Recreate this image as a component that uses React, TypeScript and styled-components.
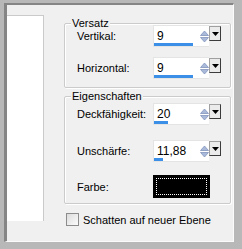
import React from "react";
import styled, { createGlobalStyle } from "styled-components";

const GlobalStyle = createGlobalStyle`
  html, body {
    margin: 0;
    padding: 0;
    background: #b8b8b8;
  }
  body {
    font-family: "Liberation Sans", Arial, sans-serif;
    font-size: 11px;
    color: #000;
  }
`;

// outer gray band around the dialog page
const Frame = styled.div`
  width: 242px;
  height: 249px;
  box-sizing: border-box;
  padding: 3px 8px 7px 4px;
  background: #b8b8b8;
`;

const Page = styled.div`
  height: 100%;
  box-sizing: border-box;
  display: flex;
  align-items: flex-start;
  background: #f0f0f0;
  border-top: 2px solid #858585;
  border-left: 3px solid #858585;
  border-right: 1px solid #fbfbfb;
  border-bottom: 1px solid #fbfbfb;
`;

const ListPanel = styled.div`
  flex-shrink: 0;
  width: 37px;
  height: 206px;
  margin-top: 10px;
  box-sizing: border-box;
  background: #fff;
  border-top: 1px solid #cacaca;
  border-right: 1px solid #cacaca;
`;

const Content = styled.div`
  width: 167px;
  margin: 18px 0 0 20px;
  display: flex;
  flex-direction: column;
`;

const Group = styled.div<{ $top?: number; $pad: string }>`
  position: relative;
  margin-top: ${(p) => p.$top ?? 0}px;
  padding: ${(p) => p.$pad};
  display: flex;
  flex-direction: column;
  border: 1px solid #cbcbcb;
  border-radius: 2px;
  box-shadow: inset 1px 1px 0 #fff, 1px 1px 0 #fff;
`;

const Legend = styled.span`
  position: absolute;
  top: -7px;
  left: 6px;
  padding: 0 1px;
  line-height: 13px;
  background: #f0f0f0;
`;

const Row = styled.div<{ $top?: number; $height?: number }>`
  display: flex;
  align-items: center;
  height: ${(p) => p.$height ?? 22}px;
  padding-left: 12px;
  margin-top: ${(p) => p.$top ?? 0}px;
`;

const Label = styled.span`
  width: 76px;
  flex-shrink: 0;
`;

const SpinField = styled.div`
  display: flex;
  align-items: flex-start;
  height: 22px;
`;

const ValueBox = styled.div`
  width: 46px;
  height: 22px;
  box-sizing: border-box;
  display: flex;
  flex-direction: column;
  background: #fff;
  border: 1px solid #e4e4e4;
  border-right: none;
`;

const Value = styled.span`
  flex: 1;
  padding: 3px 0 0 3px;
  font-size: 12px;
  line-height: 14px;
`;

const Bar = styled.div`
  height: 4px;
  background: #3b8fe6;
`;

const Spin = styled.div`
  width: 10px;
  height: 22px;
  display: flex;
  align-items: center;
  justify-content: center;
  background: #fff;
  border-top: 1px solid #e4e4e4;
  border-bottom: 1px solid #e4e4e4;
  box-sizing: border-box;
`;

const DropButton = styled.div`
  width: 12px;
  height: 15px;
  margin-top: 1px;
  box-sizing: border-box;
  display: flex;
  align-items: center;
  justify-content: center;
  background: #ebebeb;
  border: 1px solid;
  border-color: #a0a0a0 #3c3c3c #3c3c3c #a0a0a0;
`;

const Swatch = styled.div`
  width: 57px;
  height: 23px;
  box-sizing: border-box;
  padding: 3px;
  background: #000;
`;

const FocusRing = styled.div`
  height: 100%;
  box-sizing: border-box;
  border: 1px dotted #fff;
`;

const CheckRow = styled.label`
  display: flex;
  align-items: center;
  margin: 9px 0 0 2px;
`;

const CheckBox = styled.span`
  width: 13px;
  height: 13px;
  box-sizing: border-box;
  border: 1px solid #8c8c8c;
  background: linear-gradient(135deg, #dcdcdc, #fbfbfb);
`;

const CheckText = styled.span`
  margin-left: 4px;
`;

type FieldProps = {
  label: string;
  value: string;
  /** width of the blue level bar, px */
  level: number;
  top?: number;
};

const NumberRow = ({ label, value, level, top }: FieldProps): JSX.Element => (
  <Row $top={top}>
    <Label>{label}</Label>
    <SpinField>
      <ValueBox>
        <Value>{value}</Value>
        <Bar style={{ width: level }} />
      </ValueBox>
      <Spin>
        <svg width="9" height="13" viewBox="0 0 9 13">
          <path d="M0.5 5.5 L4.5 1 L8.5 5.5 Z" fill="#a9b9da" stroke="#8193bb" strokeWidth="0.8" />
          <path d="M0.5 7.5 L8.5 7.5 L4.5 12 Z" fill="#a9b9da" stroke="#8193bb" strokeWidth="0.8" />
        </svg>
      </Spin>
      <DropButton>
        <svg width="7" height="4" viewBox="0 0 7 4">
          <path d="M0 0 L7 0 L3.5 4 Z" fill="#000" />
        </svg>
      </DropButton>
    </SpinField>
  </Row>
);

const App = (): JSX.Element => {
  return (
    <>
      <GlobalStyle />
      <Frame>
        <Page>
          <ListPanel />
          <Content>
            <Group $pad="1px 0 8px">
              <Legend>Versatz</Legend>
              <NumberRow label="Vertikal:" value="9" level={39} />
              <NumberRow label="Horizontal:" value="9" level={39} top={10} />
            </Group>
            <Group $top={8} $pad="6px 0 5px">
              <Legend>Eigenschaften</Legend>
              <NumberRow label="Deckfähigkeit:" value="20" level={14} />
              <NumberRow label="Unschärfe:" value="11,88" level={9} top={15} />
              <Row $top={13} $height={23}>
                <Label>Farbe:</Label>
                <Swatch>
                  <FocusRing />
                </Swatch>
              </Row>
            </Group>
            <CheckRow>
              <CheckBox />
              <CheckText>Schatten auf neuer Ebene</CheckText>
            </CheckRow>
          </Content>
        </Page>
      </Frame>
    </>
  );
};

export default App;
